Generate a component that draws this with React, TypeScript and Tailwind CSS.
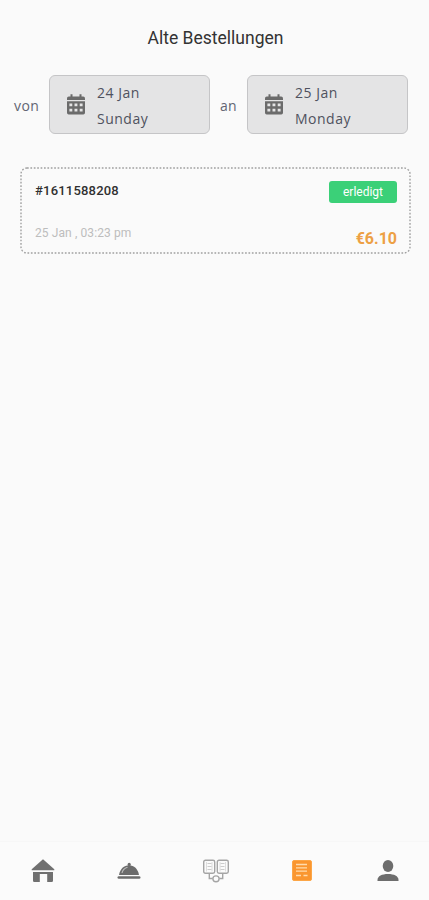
import type { ReactNode } from 'react'

interface Order {
  id: string
  date: string
  status: string
  total: string
}

const orders: Order[] = [
  { id: '#1611588208', date: '25 Jan , 03:23 pm', status: 'erledigt', total: '€6.10' },
]

function CalendarIcon() {
  return (
    <svg width="18" height="21" viewBox="0 0 18 21" className="shrink-0" fill="#6b6b6b">
      <path d="M3.5 0.3h2v3h-2zM12.5 0.3h2v3h-2z" />
      <path d="M1.8 2.4h14.4Q18 2.4 18 4.2V6H0V4.2Q0 2.4 1.8 2.4z" />
      <path
        fillRule="evenodd"
        d="M0 7.3h18v11.5Q18 20.5 16.3 20.5H1.7Q0 20.5 0 18.8zM2.4 9.4v2.8h2.9v-2.8zM7.5 9.4v2.8h2.9v-2.8zM12.7 9.4v2.8h2.9v-2.8zM2.4 14.7v2.8h2.9v-2.8zM7.5 14.7v2.8h2.9v-2.8zM12.7 14.7v2.8h2.9v-2.8z"
      />
    </svg>
  )
}

function DateField({ date, day }: { date: string; day: string }) {
  return (
    <button className="flex h-[59px] w-[161px] items-center gap-3 rounded-md border border-[#c5c5c7] bg-[#e4e4e5] pl-[17px] text-left">
      <CalendarIcon />
      <span className="pt-[3px] text-sm leading-[26px] tracking-[0.5px] text-[#4f525e]">
        <span className="block">{date}</span>
        <span className="block">{day}</span>
      </span>
    </button>
  )
}

function OrderCard({ order }: { order: Order }) {
  return (
    <div className="relative mx-auto flex h-[87px] w-[391px] justify-between px-[14px] font-[Roboto,sans-serif]">
      <svg className="absolute inset-0" width="391" height="87" fill="none">
        <rect x="1" y="1" width="389" height="85" rx="6" stroke="#a0a0a0" strokeWidth="1.4" strokeDasharray="1.7 1.7" />
      </svg>
      <div className="flex flex-col pt-[16px] pl-px">
        <span className="text-[13px] leading-4 font-medium tracking-[0.2px] text-[#303030]">{order.id}</span>
        <span className="mt-[26px] text-xs leading-4 tracking-[0.1px] text-[#bdbdbd]">{order.date}</span>
      </div>
      <div className="flex flex-col items-end pt-[14px]">
        <span className="flex h-[22px] w-[68px] items-center justify-center rounded-[3px] bg-[#3bd078] text-xs text-white">
          {order.status}
        </span>
        <span className="mt-[26px] text-base leading-5 font-bold text-[#eda044]">{order.total}</span>
      </div>
    </div>
  )
}

function NavButton({ children }: { children: ReactNode }) {
  return <button className="flex flex-1 items-center justify-center">{children}</button>
}

function BottomNav() {
  return (
    <nav className="-mr-[2px] flex h-[59px] border-t border-[#f7f7f7] bg-[#fbfbfb]">
      <NavButton>
        <svg width="24" height="24" viewBox="0 0 24 24" fill="#707070">
          <path d="M12 0.3L23.3 10.3v1H0.7v-1z" />
          <path d="M2 13h20v8.700q0 1.300-1.300 1.300h-4.500v-8H8.800v8H3.300Q2 23 2 21.700z" />
        </svg>
      </NavButton>
      <NavButton>
        <svg width="24" height="24" viewBox="0 0 24 24" fill="#6c6c6c">
          <circle cx="12.2" cy="5.4" r="1.6" />
          <path d="M2 16C3 10 7 6.3 12 6.3s9 3.700 10 9.700z" />
          <path d="M5 14c.6-3 2.500-5 5.500-5.800" fill="none" stroke="#bdbdbd" strokeWidth="1.1" />
          <rect x="0.5" y="17.2" width="23" height="2.6" rx="1.3" />
        </svg>
      </NavButton>
      <NavButton>
        <svg width="26" height="24" viewBox="0 0 26 24" fill="none" stroke="#a5a5a5" strokeWidth="1.4">
          <rect x="0.7" y="1.2" width="11" height="13" rx="1.7" />
          <rect x="14.3" y="1.2" width="11" height="13" rx="1.7" />
          <path d="M3.5 3v9.500M9 3v9.500M17 3v9.500M22.500 3v9.500" stroke="#d5d5d5" strokeWidth="0.8" />
          <path d="M4.5 4.500h4M4.500 7.500h4M4.500 10.500h4M17.500 4.500h4M17.500 7.500h4M17.500 10.500h4" stroke="#cccccc" strokeWidth="1" />
          <path d="M6.300 14.500v5h3.400M19.700 14.500v5h-3.400" />
          <ellipse cx="13" cy="19.8" rx="3.1" ry="2.9" />
        </svg>
      </NavButton>
      <NavButton>
        <svg width="20" height="22" viewBox="0 0 20 22">
          <rect x="0.5" y="0.5" width="19" height="20" rx="1.5" fill="#fa962f" stroke="#fca647" />
          <path d="M4 4.500h11M4 7.800h11M4 11.100h11M4 15.500h5M11.500 15.500h4" stroke="#ffdbad" strokeWidth="1.3" />
        </svg>
      </NavButton>
      <NavButton>
        <svg width="22" height="22" viewBox="0 0 22 22" fill="#6d6d6d">
          <ellipse cx="11" cy="6" rx="5.3" ry="6" />
          <path d="M0.500 21v-1C0.500 16 5 14 11 14s10.500 2 10.500 6v1z" />
        </svg>
      </NavButton>
    </nav>
  )
}

export default function App() {
  return (
    <div className="flex h-[900px] w-[429px] flex-col overflow-hidden bg-[#fafafa] font-['Open_Sans',sans-serif]">
      <h1 className="pt-[26px] text-center font-[Roboto,sans-serif] text-[17.5px] leading-6 text-[#333333]">
        <span className="mr-[-2px]">Alte Bestellungen</span>
      </h1>

      <div className="mt-[25px] flex items-center pl-[14px] text-sm text-[#626573]">
        <span className="w-[35px] pt-[2px] tracking-[0.4px]">von</span>
        <DateField date="24 Jan" day="Sunday" />
        <span className="ml-[10px] w-[27px] pt-[2px] tracking-[0.3px]">an</span>
        <DateField date="25 Jan" day="Monday" />
      </div>

      <main className="flex-1 pt-[33px] pl-[2px]">
        {orders.map((order) => (
          <OrderCard key={order.id} order={order} />
        ))}
      </main>

      <BottomNav />
    </div>
  )
}
